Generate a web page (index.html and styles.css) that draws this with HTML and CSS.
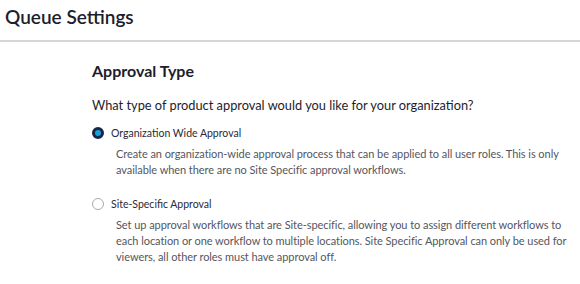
FILE: index.html
```html
<!DOCTYPE html>
<html lang="en">
<head>
    <meta charset="UTF-8">
    <meta name="viewport" content="width=device-width, initial-scale=1.0">
    <title>Queue Settings</title>
    <link rel="stylesheet" href="styles.css">
</head>
<body>
    <header class="page-header">
        <h1>Queue Settings</h1>
    </header>

    <main class="settings">
        <h2 class="section-title">Approval Type</h2>
        <p class="question">What type of product approval would you like for your organization?</p>

        <div class="option">
            <label class="option-label">
                <span class="radio checked"></span>
                Organization Wide Approval
            </label>
            <p class="option-desc">Create an organization-wide approval process that can be applied to all user roles. This is only available when there are no Site Specific approval workflows.</p>
        </div>

        <div class="option">
            <label class="option-label">
                <span class="radio"></span>
                Site-Specific Approval
            </label>
            <p class="option-desc">Set up approval workflows that are Site-specific, allowing you to assign different workflows to each location or one workflow to multiple locations. Site Specific Approval can only be used for viewers, all other roles must have approval off.</p>
        </div>
    </main>
</body>
</html>
```

FILE: styles.css
```css
:root {
    --text: #1d1d2c;
    --muted: #55565e;
    --line: #d6d5dc;
    --navy: #1c2541;
    --blue: #14a3e0;
}

* {
    margin: 0;
    padding: 0;
    box-sizing: border-box;
}

body {
    font-family: Lato, 'Open Sans', sans-serif;
    color: var(--text);
    background: #fff;
}

.page-header {
    height: 42px;
    border-bottom: 2px solid var(--line);
    padding: 5px 5px 0;
}

.page-header h1 {
    font-size: 19px;
    font-weight: 600;
    line-height: 24px;
}

.settings {
    padding: 18px 0 0 92px;
}

.section-title {
    font-size: 16px;
    font-weight: 700;
    line-height: 22px;
    margin-bottom: 14px;
}

.question {
    font-size: 12.8px;
    line-height: 18px;
    margin-bottom: 11px;
}

.option {
    margin-bottom: 18px;
}

.option-label {
    display: flex;
    align-items: center;
    gap: 7px;
    font-size: 10.5px;
    line-height: 16px;
    color: #2a2a36;
}

.radio {
    width: 12px;
    height: 12px;
    border-radius: 50%;
    border: 1px solid #a9aab2;
    background: #fff;
}

.radio.checked {
    border: 3px solid var(--navy);
    background: var(--blue);
}

.option-desc {
    margin: 5px 0 0 24px;
    max-width: 458px;
    font-size: 11px;
    letter-spacing: -0.06px;
    line-height: 16px;
    color: var(--muted);
}
```
